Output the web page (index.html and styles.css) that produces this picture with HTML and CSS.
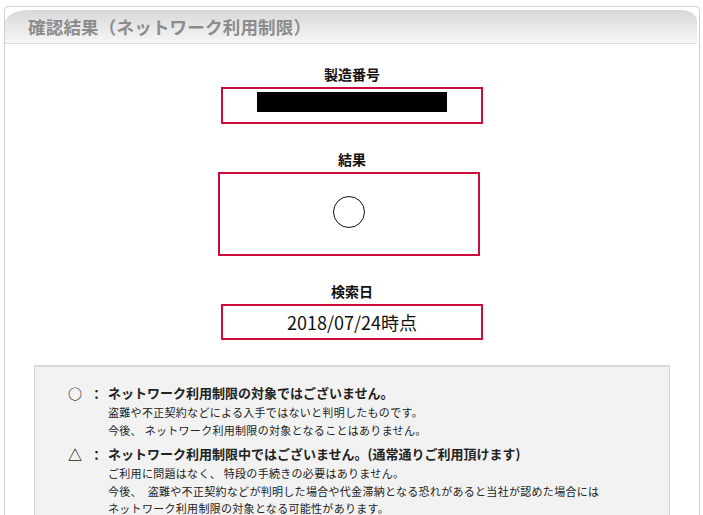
FILE: index.html
```html
<!DOCTYPE html>
<html lang="ja">
<head>
<meta charset="utf-8">
<title>確認結果（ネットワーク利用制限）</title>
<link rel="stylesheet" href="styles.css">
</head>
<body>
<div class="panel">
  <div class="header">
    <h1 class="title">確認結果（ネットワーク利用制限）</h1>
  </div>
  <div class="content">
    <div class="label label-first">製造番号</div>
    <div class="box box-serial"><div class="masked"></div></div>

    <div class="label">結果</div>
    <div class="box box-result"><div class="circle"></div></div>

    <div class="label">検索日</div>
    <div class="box box-date">2018/07/24時点</div>

    <div class="legend">
      <div class="legend-item">
        <div class="marker">○<span class="colon">：</span></div>
        <div class="desc">
          <div class="main">ネットワーク利用制限の対象ではございません。</div>
          <div class="sub">盗難や不正契約などによる入手ではないと判明したものです。</div>
          <div class="sub">今後、 ネットワーク利用制限の対象となることはありません。</div>
        </div>
      </div>
      <div class="legend-item">
        <div class="marker">△<span class="colon">：</span></div>
        <div class="desc">
          <div class="main">ネットワーク利用制限中ではございません。(通常通りご利用頂けます)</div>
          <div class="sub">ご利用に問題はなく、 特段の手続きの必要はありません。</div>
          <div class="sub">今後、　盗難や不正契約などが判明した場合や代金滞納となる恐れがあると当社が認めた場合には</div>
          <div class="sub sub-last">ネットワーク利用制限の対象となる可能性があります。</div>
        </div>
      </div>
    </div>
  </div>
</div>
</body>
</html>
```

FILE: styles.css
```css
html, body {
  margin: 0;
  padding: 0;
  background: #ffffff;
}

body {
  font-family: "Noto Sans CJK JP", "Noto Sans", sans-serif;
  color: #111;
}

.panel {
  margin: 6px 3px 0 4px;
  border: 1px solid #cfcfcf;
  border-bottom: none;
  border-radius: 5px 5px 0 0;
  padding-top: 3px;
  background: #fff;
  height: 520px;
  box-sizing: border-box;
}

.header {
  height: 33px;
  margin-right: 2px;
  background: linear-gradient(to bottom, #d8d8d8 0%, #e6e6e6 45%, #f6f6f6 100%);
  border-radius: 24px 16px 0 0 / 13px 11px 0 0;
  border-bottom: 1px solid #dcdcdc;
  display: flex;
  align-items: center;
  padding-left: 23px;
}

.title {
  margin: 0;
  font-size: 17.5px;
  font-weight: bold;
  color: #8c8c8c;
  letter-spacing: 0.2px;
  line-height: 20px;
}

.content {
  display: flex;
  flex-direction: column;
  align-items: center;
}

.label {
  font-size: 14px;
  font-weight: bold;
  line-height: 20px;
  margin-top: 25px;
  margin-bottom: 3px;
  color: #111;
}

.label-first {
  margin-top: 20px;
}

.box {
  width: 262px;
  box-sizing: border-box;
  border: 2px solid #cc0a3c;
  background: #fff;
}

.box-serial {
  height: 37px;
  display: flex;
  justify-content: center;
  padding-top: 3px;
}

.masked {
  width: 190px;
  height: 20px;
  background: #000;
}

.box-result {
  height: 84px;
  margin-right: 6px;
  display: flex;
  justify-content: center;
  padding-top: 22px;
}

.circle {
  width: 30px;
  height: 30px;
  border: 1px solid #111;
  border-radius: 50%;
}

.box-date {
  height: 36px;
  display: flex;
  align-items: center;
  justify-content: center;
  font-size: 18px;
  color: #111;
}

.legend {
  align-self: stretch;
  margin: 25px 29px 0 29px;
  border: 1px solid #d2d2d2;
  border-top: 2px solid #dadada;
  background: #f2f2f2;
  padding: 16px 0 0 33px;
  display: flex;
  flex-direction: column;
  gap: 5px;
}

.legend-item {
  display: flex;
}

.marker {
  width: 40px;
  flex: none;
  font-size: 14px;
  line-height: 20px;
  font-weight: bold;
  color: #222;
}

.colon {
  margin-left: 8px;
  font-size: 13px;
}

.main {
  font-size: 13px;
  line-height: 20px;
  font-weight: bold;
  color: #222;
}

.sub {
  font-size: 11px;
  line-height: 18px;
  letter-spacing: 0.3px;
  color: #222;
}

.sub-last {
  line-height: 16px;
}
```
